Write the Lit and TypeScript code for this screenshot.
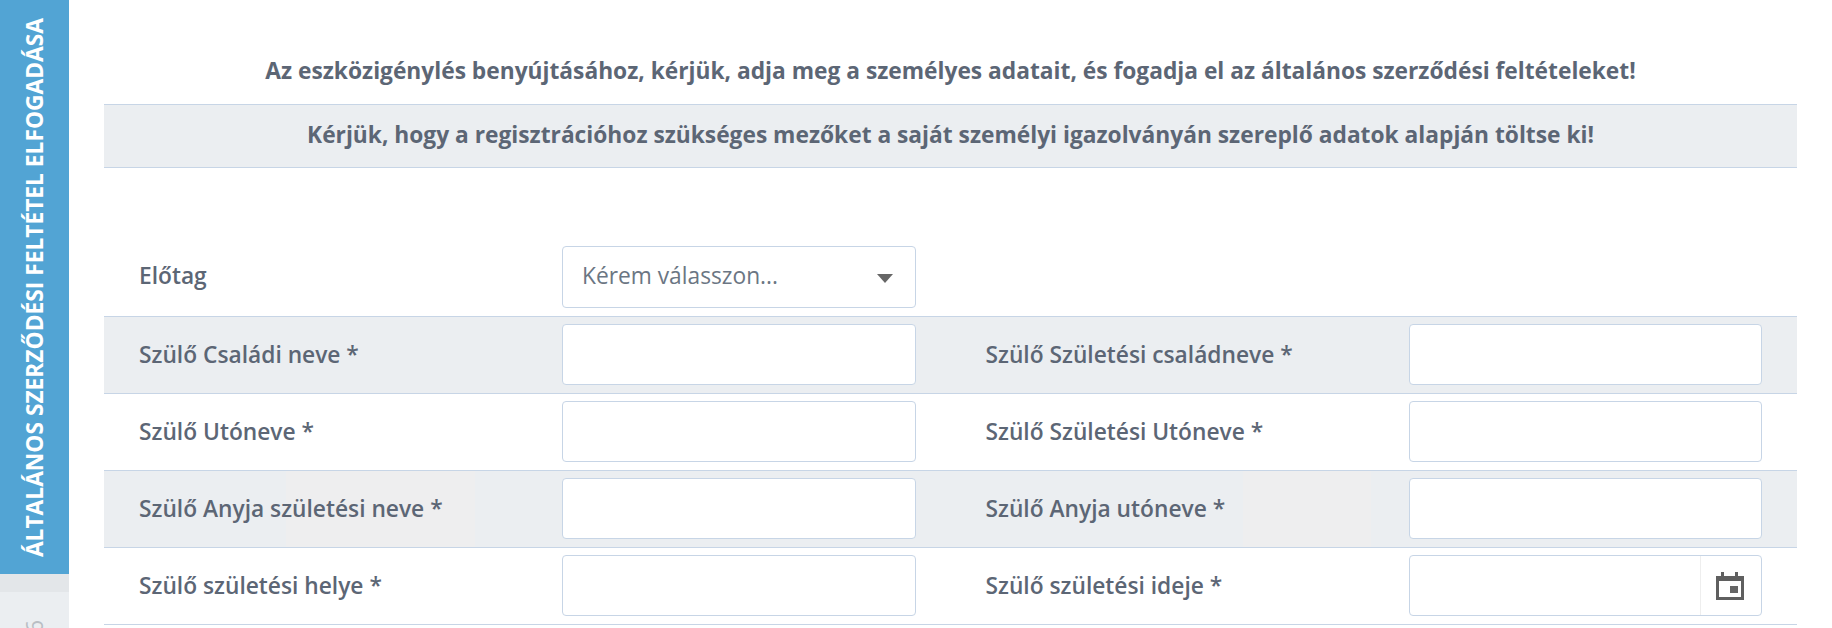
import { LitElement, html, css, svg } from "lit";
import { customElement } from "lit/decorators.js";

const rows: [string, string, boolean?][] = [
  ["Szülő Családi neve *", "Szülő Születési családneve *"],
  ["Szülő Utóneve *", "Szülő Születési Utóneve *"],
  ["Szülő Anyja születési neve *", "Szülő Anyja utóneve *"],
  ["Szülő születési helye *", "Szülő születési ideje *", true],
];

@customElement("app-root")
export class AppRoot extends LitElement {
  static styles = css`
    :host {
      display: block;
      height: 628px;
      overflow: hidden;
      background: #fff;
      font-family: "Open Sans", sans-serif;
      color: #5c6675;
    }
    .page { display: flex; height: 628px; overflow: hidden; }
    .side { width: 69px; flex: none; display: flex; flex-direction: column; background: #ebeef1; }
    .tab {
      height: 574px; flex: none; background: #52a4d4; color: #fff;
      display: flex; align-items: flex-end; justify-content: center; box-sizing: border-box; padding-bottom: 17px;
    }
    .tab span {
      writing-mode: vertical-rl; transform: rotate(180deg);
      font-size: 22.75px; font-weight: 700; line-height: 26px; white-space: nowrap;
    }
    .gap { height: 18px; flex: none; background: #e3e6e9; }
    .next {
      flex: 1; display: flex; justify-content: center; align-items: flex-start; overflow: hidden; color: #b9bec4;
      padding-top: 28px; height: 8px;
    }
    .next span { font-size: 22.75px; line-height: 26px; writing-mode: vertical-rl; transform: rotate(180deg); }
    .main { flex: 1; min-width: 0; padding: 0 35px; }
    .lead {
      height: 104px; box-sizing: border-box; padding-top: 51px; text-align: center;
      font-size: 22.75px; font-weight: 700; line-height: 40px;
    }
    .band {
      height: 64px; box-sizing: border-box; display: flex; align-items: center; justify-content: center;
      background: #ebeef1; border-top: 1px solid #c7d5e6; border-bottom: 1px solid #c7d5e6;
      font-size: 22.75px; font-weight: 700; padding-bottom: 4px;
    }
    .prefix { height: 148px; box-sizing: border-box; padding-top: 78px; }
    .row { display: grid; grid-template-columns: 846.5px 846.5px; height: 77px; box-sizing: border-box; border-top: 1px solid #c7d5e6; }
    .row.odd { background: #ebeef1; }
    .row.shade {
      background: linear-gradient(90deg, #ebeef1 182px, #eeeeef 182px, #eeeeef 371px, #ebeef1 371px, #ebeef1 1139px, #eeeeef 1139px, #eeeeef 1267px, #ebeef1 1267px);
    }
    .cell { display: grid; grid-template-columns: 423px 353.5px; padding: 7px 35px 0; align-items: start; }
    .prefix .cell { padding-top: 0; width: 846.5px; box-sizing: border-box; }
    .label { font-size: 22.75px; font-weight: 600; color: #5c6675; line-height: 61px; }
    .prefix .label { line-height: 60px; }
    .box {
      height: 61px; box-sizing: border-box; background: #fff; border: 1px solid #c7d5e6; border-radius: 4px;
      display: flex; align-items: center; justify-content: space-between;
    }
    .select { height: 62px; padding: 0 22px 0 19px; font-size: 22.75px; color: #6b7683; }
    .select span { margin-top: -3px; }
    .arrow { width: 0; height: 0; border-left: 8px solid transparent; border-right: 8px solid transparent; border-top: 9px solid #666; margin-top: 3px; }
    .date { justify-content: flex-end; }
    .addon { width: 61px; height: 100%; box-sizing: border-box; border-left: 1px solid #eee; display: flex; align-items: center; justify-content: center; }
    .addon svg { display: block; margin: 0 0 0 -2px; }
  `;

  private icon() {
    return html`<svg width="28" height="28" viewBox="0 0 28 28">
      ${svg`<path fill="#5f5f5f" fill-rule="evenodd" d="M5 0h3v4h11V0h3v4h6v24H0V4h5zM3 9v16h22V9z"/>
      <rect x="14" y="14" width="8" height="7" fill="#666"/>`}
    </svg>`;
  }

  render() {
    return html`<div class="page">
      <aside class="side">
        <div class="tab"><span>ÁLTALÁNOS SZERZŐDÉSI FELTÉTEL ELFOGADÁSA</span></div>
        <div class="gap"></div>
        <div class="next"><span>6</span></div>
      </aside>
      <main class="main">
        <div class="lead">Az eszközigénylés benyújtásához, kérjük, adja meg a személyes adatait, és fogadja el az általános szerződési feltételeket!</div>
        <div class="band">Kérjük, hogy a regisztrációhoz szükséges mezőket a saját személyi igazolványán szereplő adatok alapján töltse ki!</div>
        <div class="prefix">
          <div class="cell">
            <div class="label">Előtag</div>
            <div class="box select"><span>Kérem válasszon...</span><i class="arrow"></i></div>
          </div>
        </div>
        ${rows.map(([a, b, date], i) => html`<div class="row ${i % 2 === 0 ? "odd" : ""} ${i === 2 ? "shade" : ""}">
          <div class="cell"><div class="label">${a}</div><div class="box"></div></div>
          <div class="cell"><div class="label">${b}</div>
            ${date
              ? html`<div class="box date"><div class="addon">${this.icon()}</div></div>`
              : html`<div class="box"></div>`}
          </div>
        </div>`)}
        <div class="row"></div>
      </main>
    </div>`;
  }
}
